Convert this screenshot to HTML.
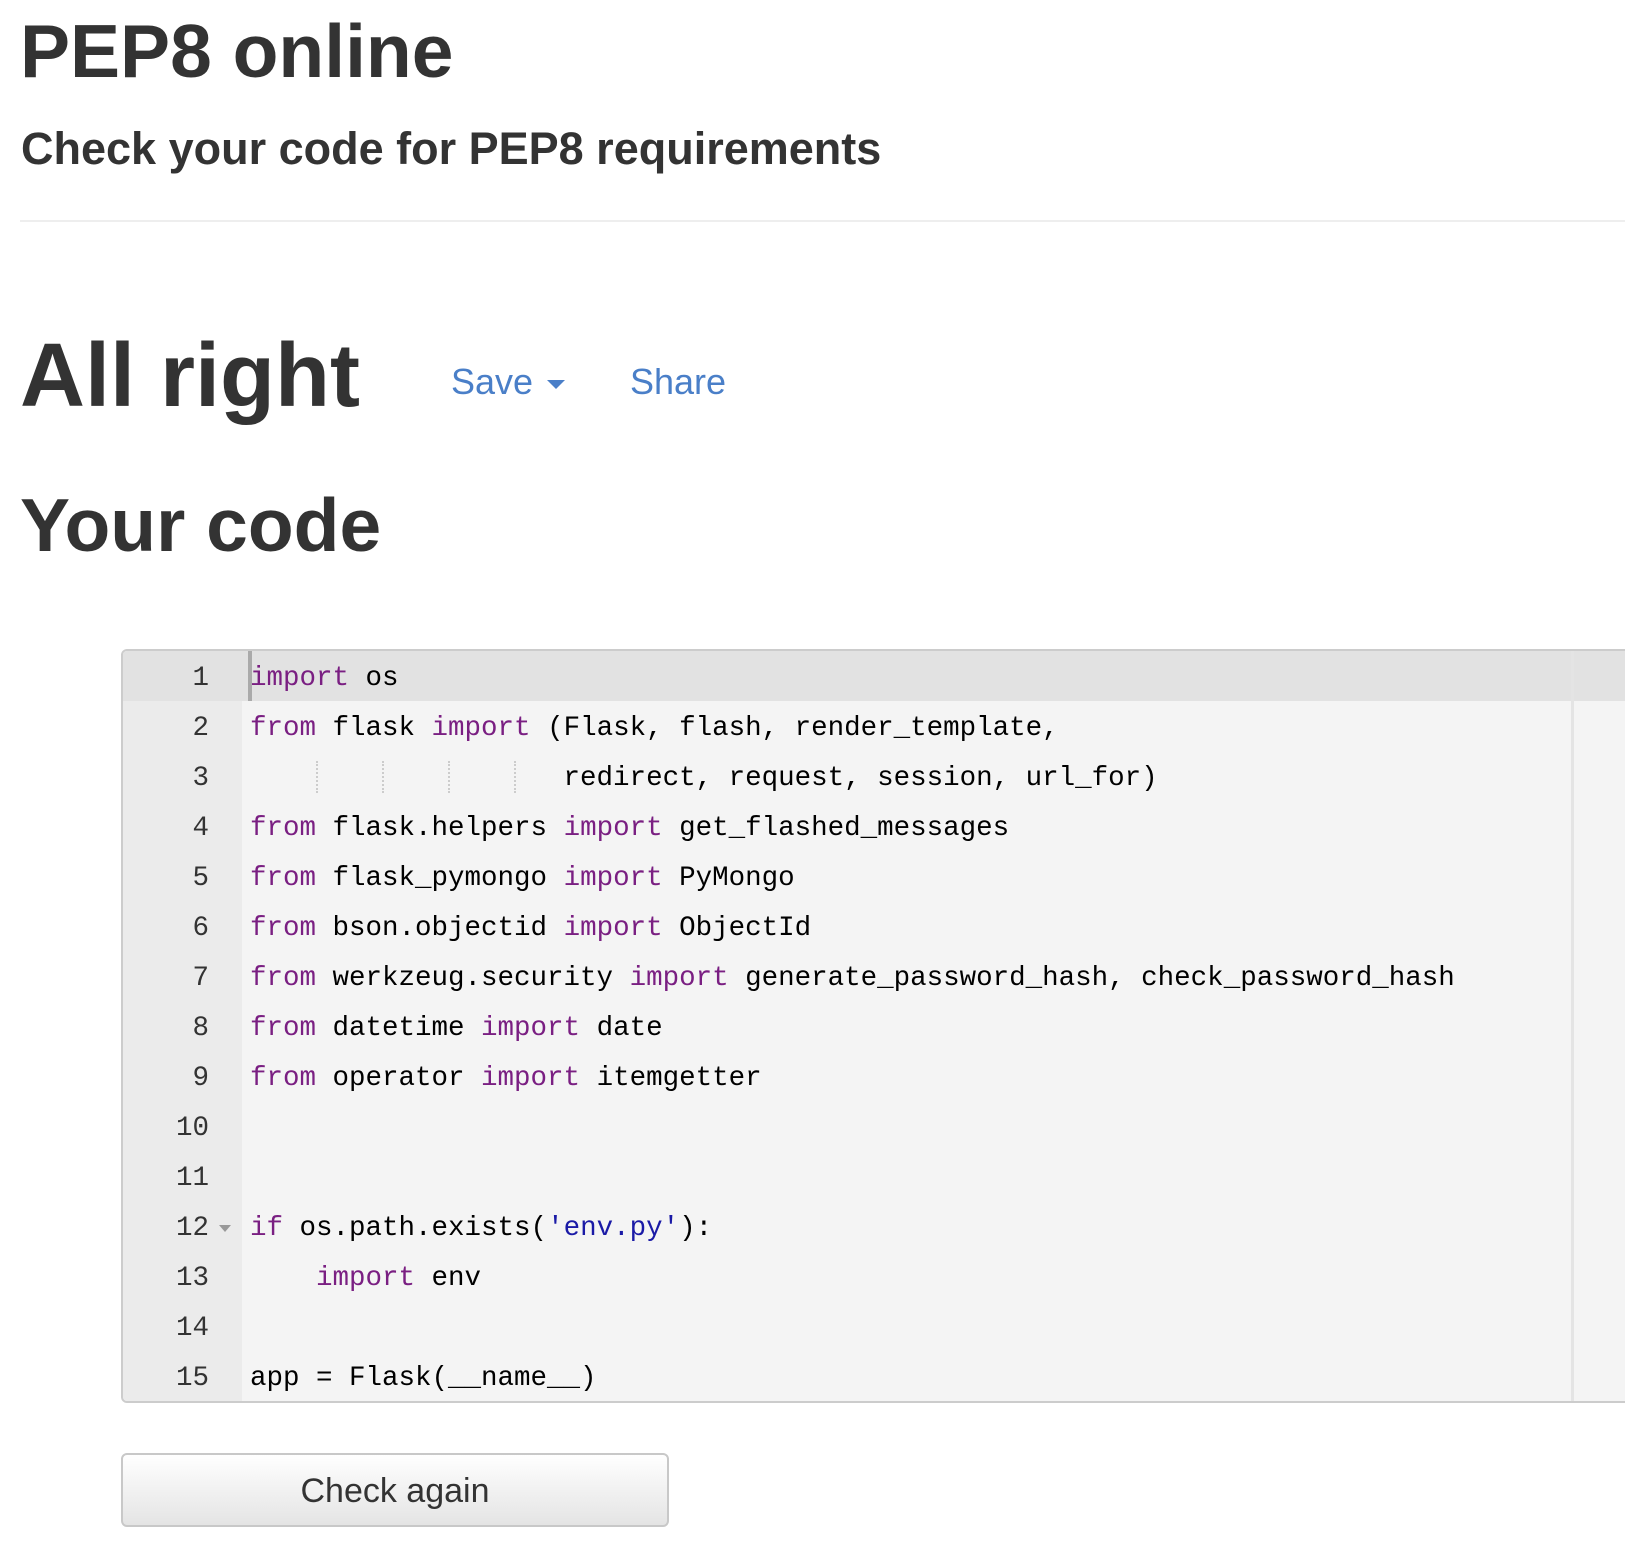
<!DOCTYPE html>
<html><head><meta charset="utf-8"><style>
body{margin:0;width:1625px;height:1552px;background:#fff;position:relative;overflow:hidden;font-family:"Liberation Sans",Arial,sans-serif;color:#333}
.t{position:absolute;line-height:1;font-weight:bold;white-space:nowrap}
hr{position:absolute;left:20px;top:220px;width:1620px;margin:0;border:0;border-top:2px solid #eee}
.lnk{position:absolute;line-height:1;font-size:36px;color:#4a7fc8;white-space:nowrap}
.ed{position:absolute;left:121px;top:649px;width:1520px;height:750px;border:2px solid #ccc;border-radius:6px;background:#f4f4f4;overflow:hidden}
.gut{position:absolute;left:0;top:0;width:119px;height:100%;background:#ebebeb}
.rul{position:absolute;left:1448px;top:0;width:3px;height:100%;background:#e4e4e4}
.ln{position:absolute;left:0;height:50px;width:100%;font-family:"Liberation Mono","DejaVu Sans Mono",monospace;font-size:27.5px;line-height:56px;white-space:pre}
.ln .n{position:absolute;left:0;width:86px;text-align:right;color:#333}
.ln .c{position:absolute;left:127px;color:#000}
.k{color:#7a1f82}.s{color:#1a1aa6}
.act{background:#e2e2e2}
.g{position:absolute;top:10px;height:32px;border-left:2px dotted #ccc}
.btn{position:absolute;left:121px;top:1453px;width:544px;height:70px;border:2px solid #c8c8c8;border-radius:6px;background:linear-gradient(#fff,#e4e4e4);font-size:34px;line-height:72px;text-align:center;color:#333}
</style></head><body>
<div class="t" style="left:20px;top:14px;font-size:75px">PEP8 online</div>
<div class="t" style="left:21px;top:126px;font-size:45px">Check your code for PEP8 requirements</div>
<hr>
<div class="t" style="left:20px;top:331px;font-size:90px">All right</div>
<div class="lnk" style="left:451px;top:364px">Save <span style="display:inline-block;width:0;height:0;border-left:9px solid transparent;border-right:9px solid transparent;border-top:9px solid #4a7fc8;vertical-align:middle;margin-left:4px"></span></div>
<div class="lnk" style="left:630px;top:364px">Share</div>
<div class="t" style="left:20px;top:488px;font-size:75px">Your code</div>
<div class="ed">
<div class="gut"></div>
<div class="ln act" style="top:0"><span class="n">1</span><span class="c"><span class="k">import</span> os</span><span style="position:absolute;left:125px;top:0;width:4px;height:50px;background:#aaa"></span></div>
<div class="ln" style="top:50px"><span class="n">2</span><span class="c"><span class="k">from</span> flask <span class="k">import</span> (Flask, flash, render_template,</span></div>
<div class="ln" style="top:100px"><span class="n">3</span><span class="c">                   redirect, request, session, url_for)</span><span class="g" style="left:193px"></span><span class="g" style="left:259px"></span><span class="g" style="left:325px"></span><span class="g" style="left:391px"></span></div>
<div class="ln" style="top:150px"><span class="n">4</span><span class="c"><span class="k">from</span> flask.helpers <span class="k">import</span> get_flashed_messages</span></div>
<div class="ln" style="top:200px"><span class="n">5</span><span class="c"><span class="k">from</span> flask_pymongo <span class="k">import</span> PyMongo</span></div>
<div class="ln" style="top:250px"><span class="n">6</span><span class="c"><span class="k">from</span> bson.objectid <span class="k">import</span> ObjectId</span></div>
<div class="ln" style="top:300px"><span class="n">7</span><span class="c"><span class="k">from</span> werkzeug.security <span class="k">import</span> generate_password_hash, check_password_hash</span></div>
<div class="ln" style="top:350px"><span class="n">8</span><span class="c"><span class="k">from</span> datetime <span class="k">import</span> date</span></div>
<div class="ln" style="top:400px"><span class="n">9</span><span class="c"><span class="k">from</span> operator <span class="k">import</span> itemgetter</span></div>
<div class="ln" style="top:450px"><span class="n">10</span></div>
<div class="ln" style="top:500px"><span class="n">11</span></div>
<div class="ln" style="top:550px"><span class="n">12</span><span style="position:absolute;left:96px;top:24px;width:0;height:0;border-left:6px solid transparent;border-right:6px solid transparent;border-top:7px solid #999"></span><span class="c"><span class="k">if</span> os.path.exists(<span class="s">'env.py'</span>):</span></div>
<div class="ln" style="top:600px"><span class="n">13</span><span class="c">    <span class="k">import</span> env</span></div>
<div class="ln" style="top:650px"><span class="n">14</span></div>
<div class="ln" style="top:700px"><span class="n">15</span><span class="c">app = Flask(__name__)</span></div>
<div class="rul"></div>
</div>
<div class="btn">Check again</div>
</body></html>
